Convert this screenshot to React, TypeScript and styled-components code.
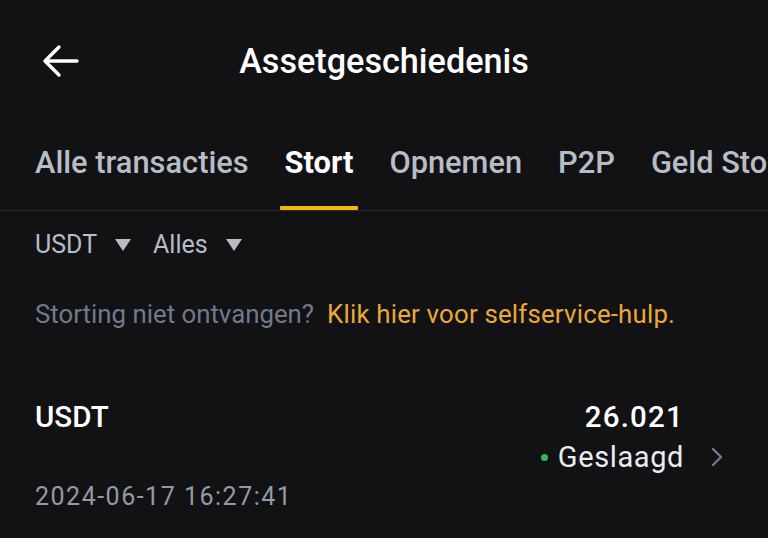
import React from "react";
import styled, { createGlobalStyle } from "styled-components";

const Global = createGlobalStyle`
  html, body { margin: 0; padding: 0; background: #121215; }
  body { font-family: Roboto, "Noto Sans", sans-serif; }
`;

const Page = styled.div`
  width: 768px;
  height: 538px;
  background: #121215;
  color: #eaecef;
  overflow: hidden;
  display: flex;
  flex-direction: column;
`;

const Header = styled.div`
  position: relative;
  height: 122px;
  display: flex;
  align-items: center;
  justify-content: center;
`;

const BackButton = styled.button`
  position: absolute;
  left: 40px;
  top: 43px;
  width: 40px;
  height: 36px;
  padding: 0;
  border: 0;
  background: none;
  display: flex;
  align-items: center;
  justify-content: center;
`;

const Title = styled.h1`
  margin: 0;
  font-size: 34.2px;
  line-height: 40px;
  font-weight: 500;
  color: #ffffff;
`;

const Tabs = styled.div`
  display: flex;
  gap: 36px;
  padding: 0 0 0 35px;
  border-bottom: 1px solid #2a2a2f;
  white-space: nowrap;
  overflow: hidden;
`;

const Tab = styled.div<{ $active?: boolean }>`
  position: relative;
  height: 88px;
  padding-bottom: 8px;
  box-sizing: border-box;
  display: flex;
  align-items: center;
  font-size: 30.8px;
  font-weight: ${(p) => (p.$active ? 700 : 500)};
  color: ${(p) => (p.$active ? "#ffffff" : "#b7bdc6")};
  &::after {
    content: "";
    display: ${(p) => (p.$active ? "block" : "none")};
    position: absolute;
    left: -5px;
    right: -5px;
    bottom: 0;
    height: 4px;
    border-radius: 1px;
    background: #f0b90b;
  }
`;

const Filters = styled.div`
  display: flex;
  align-items: center;
  gap: 22px;
  padding: 19px 35px 0;
  height: 30px;
`;

const Filter = styled.div`
  display: flex;
  align-items: center;
  gap: 18px;
  font-size: 25px;
  line-height: 30px;
  color: #b7bdc6;
`;

const Caret = styled.span`
  width: 0;
  height: 0;
  border-left: 8px solid transparent;
  border-right: 8px solid transparent;
  border-top: 12px solid #b7bdc6;
`;

const Help = styled.div`
  padding: 39px 35px 0;
  font-size: 25.8px;
  line-height: 30px;
  color: #707a8a;
  white-space: nowrap;
`;

const HelpLink = styled.span`
  color: #e9a936;
  margin-left: 13px;
  letter-spacing: 0.2px;
`;

const Row = styled.div`
  display: flex;
  justify-content: space-between;
  align-items: flex-start;
  padding: 71px 44px 0 35px;
`;

const Left = styled.div`
  display: flex;
  flex-direction: column;
  gap: 46px;
`;

const Asset = styled.div`
  font-size: 29.5px;
  line-height: 34px;
  font-weight: 500;
  color: #ffffff;
`;

const DateText = styled.div`
  font-size: 25px;
  line-height: 34px;
  letter-spacing: 1.5px;
  color: #929aa5;
`;

const Right = styled.div`
  display: flex;
  flex-direction: column;
  align-items: flex-end;
  gap: 6px;
`;

const Amount = styled.div`
  font-size: 29.5px;
  line-height: 34px;
  font-weight: 500;
  letter-spacing: 1.2px;
  color: #ffffff;
  margin-right: 40px;
`;

const Status = styled.div`
  display: flex;
  align-items: center;
  font-size: 29px;
  line-height: 34px;
  letter-spacing: 0.6px;
  color: #eaecef;
`;

const Dot = styled.span`
  width: 7px;
  height: 7px;
  border-radius: 50%;
  background: #2ebd55;
  margin-right: 10px;
`;

const Chevron = styled.svg`
  margin-left: 26px;
`;

export default function App() {
  return (
    <Page>
      <Global />
      <Header>
        <BackButton aria-label="Terug">
          <svg width="38" height="34" viewBox="0 0 38 34" fill="none">
            <path d="M36 17H4M18 3L4 17l14 14" stroke="#ffffff" strokeWidth="3.4" strokeLinecap="round" strokeLinejoin="round" />
          </svg>
        </BackButton>
        <Title>Assetgeschiedenis</Title>
      </Header>
      <Tabs>
        <Tab>Alle transacties</Tab>
        <Tab $active>Stort</Tab>
        <Tab>Opnemen</Tab>
        <Tab>P2P</Tab>
        <Tab>Geld Storten</Tab>
      </Tabs>
      <Filters>
        <Filter>USDT <Caret /></Filter>
        <Filter>Alles <Caret /></Filter>
      </Filters>
      <Help>
        Storting niet ontvangen?<HelpLink>Klik hier voor selfservice-hulp.</HelpLink>
      </Help>
      <Row>
        <Left>
          <Asset>USDT</Asset>
          <DateText>2024-06-17 16:27:41</DateText>
        </Left>
        <Right>
          <Amount>26.021</Amount>
          <Status>
            <Dot />
            Geslaagd
            <Chevron width="14" height="22" viewBox="0 0 14 22" fill="none">
              <path d="M3 3l8 8-8 8" stroke="#707a8a" strokeWidth="2.4" strokeLinecap="round" strokeLinejoin="round" />
            </Chevron>
          </Status>
        </Right>
      </Row>
    </Page>
  );
}
